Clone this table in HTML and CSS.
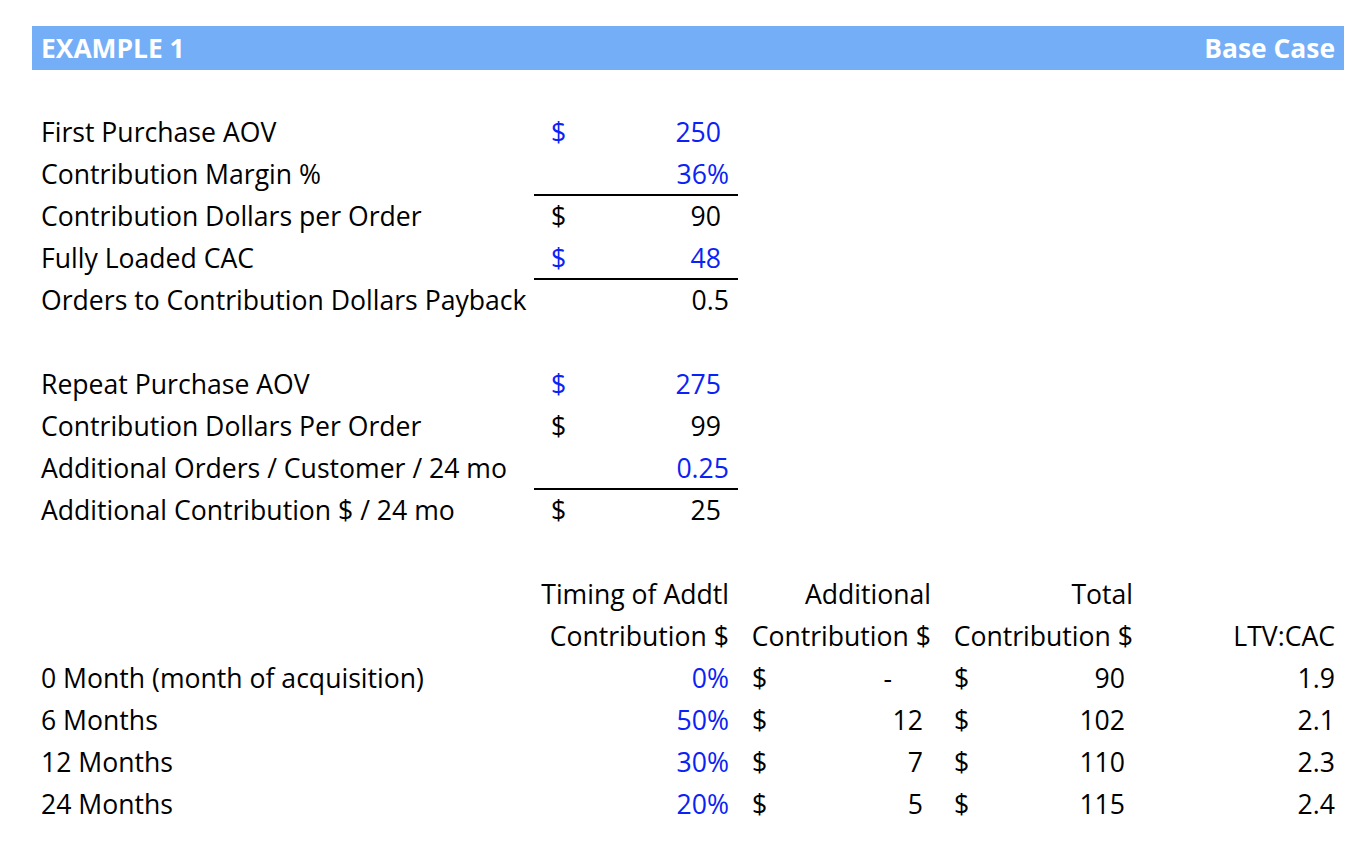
FILE: index.html
```html
<!DOCTYPE html>
<html>
<head>
<meta charset="utf-8">
<link rel="stylesheet" href="styles.css">
</head>
<body>
<div class="sheet">
  <div class="banner"><span>EXAMPLE 1</span><span>Base Case</span></div>
  <div class="grid">
    <div class="row blank"></div>

    <div class="lbl">First Purchase AOV</div>
    <div class="val in"><span class="cur">$</span><span class="num int">250</span></div>
    <div class="span3"></div>

    <div class="lbl">Contribution Margin %</div>
    <div class="val in rule"><span class="cur"></span><span class="num">36%</span></div>
    <div class="span3"></div>

    <div class="lbl">Contribution Dollars per Order</div>
    <div class="val"><span class="cur">$</span><span class="num int">90</span></div>
    <div class="span3"></div>

    <div class="lbl">Fully Loaded CAC</div>
    <div class="val in rule"><span class="cur">$</span><span class="num int">48</span></div>
    <div class="span3"></div>

    <div class="lbl">Orders to Contribution Dollars Payback</div>
    <div class="val"><span class="cur"></span><span class="num">0.5</span></div>
    <div class="span3"></div>

    <div class="row blank"></div>

    <div class="lbl">Repeat Purchase AOV</div>
    <div class="val in"><span class="cur">$</span><span class="num int">275</span></div>
    <div class="span3"></div>

    <div class="lbl">Contribution Dollars Per Order</div>
    <div class="val"><span class="cur">$</span><span class="num int">99</span></div>
    <div class="span3"></div>

    <div class="lbl">Additional Orders / Customer / 24 mo</div>
    <div class="val in rule"><span class="cur"></span><span class="num">0.25</span></div>
    <div class="span3"></div>

    <div class="lbl">Additional Contribution $ / 24 mo</div>
    <div class="val"><span class="cur">$</span><span class="num int">25</span></div>
    <div class="span3"></div>

    <div class="row blank"></div>

    <div class="lbl"></div>
    <div class="hd">Timing of Addtl</div>
    <div class="hd">Additional</div>
    <div class="hd">Total</div>
    <div class="hd"></div>

    <div class="lbl"></div>
    <div class="hd">Contribution $</div>
    <div class="hd">Contribution $</div>
    <div class="hd">Contribution $</div>
    <div class="hd">LTV:CAC</div>

    <div class="lbl">0 Month (month of acquisition)</div>
    <div class="val in"><span class="num">0%</span></div>
    <div class="val c2"><span class="cur">$</span><span class="num dash">-</span></div>
    <div class="val c2"><span class="cur">$</span><span class="num int">90</span></div>
    <div class="val"><span class="num">1.9</span></div>

    <div class="lbl">6 Months</div>
    <div class="val in"><span class="num">50%</span></div>
    <div class="val c2"><span class="cur">$</span><span class="num int">12</span></div>
    <div class="val c2"><span class="cur">$</span><span class="num int">102</span></div>
    <div class="val"><span class="num">2.1</span></div>

    <div class="lbl">12 Months</div>
    <div class="val in"><span class="num">30%</span></div>
    <div class="val c2"><span class="cur">$</span><span class="num int">7</span></div>
    <div class="val c2"><span class="cur">$</span><span class="num int">110</span></div>
    <div class="val"><span class="num">2.3</span></div>

    <div class="lbl">24 Months</div>
    <div class="val in"><span class="num">20%</span></div>
    <div class="val c2"><span class="cur">$</span><span class="num int">5</span></div>
    <div class="val c2"><span class="cur">$</span><span class="num int">115</span></div>
    <div class="val"><span class="num">2.4</span></div>
  </div>
</div>
</body>
</html>
```

FILE: styles.css
```css
html, body {
  margin: 0;
  padding: 0;
  background: #ffffff;
}
body {
  font-family: "Open Sans", "Liberation Sans", sans-serif;
  font-size: 26.6px;
  color: #000000;
}
.sheet {
  padding: 26px 24px 0 32px;
  width: 1312px;
}
.banner {
  height: 44px;
  background: #74aef7;
  color: #ffffff;
  font-weight: 700;
  font-size: 26.4px;
  display: flex;
  align-items: center;
  justify-content: space-between;
  padding: 0 9px 0 9px;
  box-sizing: border-box;
}
.grid {
  display: grid;
  grid-template-columns: 502px 204px 202px 202px 202px;
  grid-auto-rows: 42px;
}
.grid > div {
  display: flex;
  align-items: center;
  box-sizing: border-box;
  white-space: nowrap;
  padding-bottom: 3px;
}
.row {
  grid-column: 1 / -1;
}
.span3 {
  grid-column: 3 / 6;
}
.lbl {
  padding-left: 9px;
}
.val {
  justify-content: space-between;
  padding: 0 9px 0 17px;
}
.val .num {
  margin-left: auto;
}
.val.c2 {
  padding-left: 14px;
}
.num.int {
  padding-right: 8px;
}
.num.dash {
  padding-right: 39px;
}
.in {
  color: #0a22f5;
}
.grid > .rule {
  border-bottom: 2px solid #000000;
  padding-bottom: 1px;
}
.hd {
  justify-content: flex-end;
  padding-right: 9px;
}
```
